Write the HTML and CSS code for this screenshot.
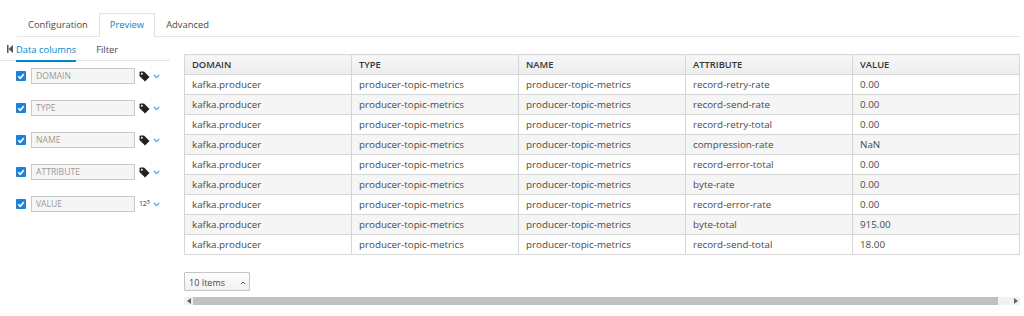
FILE: index.html
```html
<!DOCTYPE html>
<html>
  <head>
    <meta charset="utf-8">
    <title>Preview</title>
    <link rel="stylesheet" href="styles.css">
  </head>
  <body>
    <ul class="tabs">
      <li>Configuration</li>
      <li class="active">Preview</li>
      <li>Advanced</li>
    </ul>

    <div class="main">
      <div class="sidebar">
        <div class="subtabs">
          <span class="collapse">
            <svg width="6" height="8" viewBox="0 0 6 8"><rect x="0" y="0" width="1.5" height="8" fill="#555"/><path d="M6 0 L1.5 4 L6 8 Z" fill="#555"/></svg>
          </span>
          <span class="subtab active">Data columns</span>
          <span class="subtab">Filter</span>
        </div>

        <div class="col-row">
          <span class="check"><svg width="10" height="10" viewBox="0 0 10 10"><path d="M2.2 5.2 L4.2 7.2 L7.9 2.9" stroke="#fff" stroke-width="1.6" fill="none"/></svg></span>
          <input class="col-name" type="text" placeholder="DOMAIN">
          <span class="type-icon"><svg width="11" height="11" viewBox="0 0 11 11"><path d="M0.5 1.5 Q0.5 0.5 1.5 0.5 H5 L10.5 6 L6 10.5 L0.5 5 Z" fill="#222"/><circle cx="2.8" cy="2.8" r="1" fill="#fff"/></svg></span>
          <span class="chev"><svg width="7" height="5" viewBox="0 0 7 5"><path d="M0.8 0.8 L3.5 3.6 L6.2 0.8" stroke="#39a5dc" stroke-width="1.1" fill="none"/></svg></span>
        </div>
        <div class="col-row">
          <span class="check"><svg width="10" height="10" viewBox="0 0 10 10"><path d="M2.2 5.2 L4.2 7.2 L7.9 2.9" stroke="#fff" stroke-width="1.6" fill="none"/></svg></span>
          <input class="col-name" type="text" placeholder="TYPE">
          <span class="type-icon"><svg width="11" height="11" viewBox="0 0 11 11"><path d="M0.5 1.5 Q0.5 0.5 1.5 0.5 H5 L10.5 6 L6 10.5 L0.5 5 Z" fill="#222"/><circle cx="2.8" cy="2.8" r="1" fill="#fff"/></svg></span>
          <span class="chev"><svg width="7" height="5" viewBox="0 0 7 5"><path d="M0.8 0.8 L3.5 3.6 L6.2 0.8" stroke="#39a5dc" stroke-width="1.1" fill="none"/></svg></span>
        </div>
        <div class="col-row">
          <span class="check"><svg width="10" height="10" viewBox="0 0 10 10"><path d="M2.2 5.2 L4.2 7.2 L7.9 2.9" stroke="#fff" stroke-width="1.6" fill="none"/></svg></span>
          <input class="col-name" type="text" placeholder="NAME">
          <span class="type-icon"><svg width="11" height="11" viewBox="0 0 11 11"><path d="M0.5 1.5 Q0.5 0.5 1.5 0.5 H5 L10.5 6 L6 10.5 L0.5 5 Z" fill="#222"/><circle cx="2.8" cy="2.8" r="1" fill="#fff"/></svg></span>
          <span class="chev"><svg width="7" height="5" viewBox="0 0 7 5"><path d="M0.8 0.8 L3.5 3.6 L6.2 0.8" stroke="#39a5dc" stroke-width="1.1" fill="none"/></svg></span>
        </div>
        <div class="col-row">
          <span class="check"><svg width="10" height="10" viewBox="0 0 10 10"><path d="M2.2 5.2 L4.2 7.2 L7.9 2.9" stroke="#fff" stroke-width="1.6" fill="none"/></svg></span>
          <input class="col-name" type="text" placeholder="ATTRIBUTE">
          <span class="type-icon"><svg width="11" height="11" viewBox="0 0 11 11"><path d="M0.5 1.5 Q0.5 0.5 1.5 0.5 H5 L10.5 6 L6 10.5 L0.5 5 Z" fill="#222"/><circle cx="2.8" cy="2.8" r="1" fill="#fff"/></svg></span>
          <span class="chev"><svg width="7" height="5" viewBox="0 0 7 5"><path d="M0.8 0.8 L3.5 3.6 L6.2 0.8" stroke="#39a5dc" stroke-width="1.1" fill="none"/></svg></span>
        </div>
        <div class="col-row">
          <span class="check"><svg width="10" height="10" viewBox="0 0 10 10"><path d="M2.2 5.2 L4.2 7.2 L7.9 2.9" stroke="#fff" stroke-width="1.6" fill="none"/></svg></span>
          <input class="col-name" type="text" placeholder="VALUE">
          <span class="type-icon num">12<sup>3</sup></span>
          <span class="chev"><svg width="7" height="5" viewBox="0 0 7 5"><path d="M0.8 0.8 L3.5 3.6 L6.2 0.8" stroke="#39a5dc" stroke-width="1.1" fill="none"/></svg></span>
        </div>
      </div>

      <div class="content">
        <table class="grid">
          <thead>
            <tr><th>DOMAIN</th><th>TYPE</th><th>NAME</th><th>ATTRIBUTE</th><th>VALUE</th></tr>
          </thead>
          <tbody>
            <tr><td>kafka.producer</td><td>producer-topic-metrics</td><td>producer-topic-metrics</td><td>record-retry-rate</td><td>0.00</td></tr>
            <tr><td>kafka.producer</td><td>producer-topic-metrics</td><td>producer-topic-metrics</td><td>record-send-rate</td><td>0.00</td></tr>
            <tr><td>kafka.producer</td><td>producer-topic-metrics</td><td>producer-topic-metrics</td><td>record-retry-total</td><td>0.00</td></tr>
            <tr><td>kafka.producer</td><td>producer-topic-metrics</td><td>producer-topic-metrics</td><td>compression-rate</td><td>NaN</td></tr>
            <tr><td>kafka.producer</td><td>producer-topic-metrics</td><td>producer-topic-metrics</td><td>record-error-total</td><td>0.00</td></tr>
            <tr><td>kafka.producer</td><td>producer-topic-metrics</td><td>producer-topic-metrics</td><td>byte-rate</td><td>0.00</td></tr>
            <tr><td>kafka.producer</td><td>producer-topic-metrics</td><td>producer-topic-metrics</td><td>record-error-rate</td><td>0.00</td></tr>
            <tr><td>kafka.producer</td><td>producer-topic-metrics</td><td>producer-topic-metrics</td><td>byte-total</td><td>915.00</td></tr>
            <tr><td>kafka.producer</td><td>producer-topic-metrics</td><td>producer-topic-metrics</td><td>record-send-total</td><td>18.00</td></tr>
          </tbody>
        </table>

        <div class="pager">
          <button class="page-size">10 Items <span class="caret"><svg width="6" height="4" viewBox="0 0 6 4"><path d="M0.8 3.2 L3 1 L5.2 3.2" stroke="#555" stroke-width="1" fill="none"/></svg></span></button>
        </div>

        <div class="hscroll">
          <span class="arrow left"><svg width="4" height="6" viewBox="0 0 4 6"><path d="M4 0 L0 3 L4 6 Z" fill="#666"/></svg></span>
          <span class="thumb"></span>
          <span class="arrow right"><svg width="4" height="6" viewBox="0 0 4 6"><path d="M0 0 L4 3 L0 6 Z" fill="#666"/></svg></span>
        </div>
      </div>
    </div>
  </body>
</html>
```

FILE: styles.css
```css
body {
  margin: 0;
  font-family: "Open Sans", sans-serif;
  font-size: 10px;
  color: #4a4a4a;
  background: #fff;
}

.tabs {
  list-style: none;
  margin: 0 4px 0 17px;
  padding: 13px 0 0 0;
  display: flex;
  border-bottom: 1px solid #e6e6e6;
}
.tabs li {
  height: 22px;
  line-height: 22px;
  padding: 0 10px;
  font-size: 9.4px;
  color: #4a4a4a;
  border: 1px solid transparent;
  border-bottom: none;
  margin-bottom: -1px;
}
.tabs li.active {
  color: #0088ce;
  border-color: #e2e2e2;
  background: #fff;
  height: 23px;
}

.main {
  display: flex;
  align-items: flex-start;
}

.sidebar {
  width: 170px;
  flex: none;
}
.subtabs {
  display: flex;
  align-items: center;
  height: 22px;
  margin-top: 1px;
  border-bottom: 1px solid #e6e6e6;
}
.collapse {
  display: flex;
  margin: 0 3px 0 7px;
}
.subtab {
  line-height: 21px;
  padding-top: 1px;
  margin-right: 20px;
  font-size: 9.4px;
}
.subtab.active {
  color: #0088ce;
  border-bottom: 2px solid #0088ce;
  margin-bottom: -1px;
}

.subtabs + .col-row {
  margin-top: -1px;
}
.col-row {
  display: flex;
  align-items: center;
  height: 32px;
  padding-left: 16px;
}
.check {
  width: 10px;
  height: 10px;
  border-radius: 1px;
  background: #1e80d6;
  display: flex;
  align-items: center;
  justify-content: center;
}
.col-name {
  width: 104px;
  height: 16px;
  box-sizing: border-box;
  margin: 0 0 0 5px;
  padding: 0 4px;
  border: 1px solid #c8c8c8;
  background: #f5f5f5;
  font-family: "Open Sans", sans-serif;
  font-size: 8.6px;
}
.col-name::placeholder {
  color: #9a9a9a;
}
.type-icon {
  display: flex;
  width: 11px;
  margin-left: 4px;
}
.type-icon.num {
  font-size: 7px;
  color: #333;
  letter-spacing: -0.3px;
  display: block;
  line-height: 10px;
}
.type-icon.num sup {
  font-size: 6px;
  vertical-align: 2px;
  line-height: 0;
}
.chev {
  display: flex;
  margin-left: 3px;
  padding-top: 1px;
}

.content {
  flex: 1;
  margin: 17px 4px 0 14px;
}
.grid {
  width: 100%;
  border-collapse: collapse;
  table-layout: fixed;
  border: 1px solid #d6d6d6;
}
.grid th,
.grid td {
  text-align: left;
  padding: 0 7px;
  height: 19px;
  border: 1px solid #d6d6d6;
  white-space: nowrap;
  overflow: hidden;
}
.grid th {
  font-weight: 600;
  font-size: 9.4px;
  color: #363636;
  background: linear-gradient(#f7f7f7, #ededed);
}
.grid td {
  font-size: 9.8px;
}
.grid tbody tr:nth-child(even) td {
  background: #f5f5f5;
}

.pager {
  margin-top: 17px;
}
.page-size {
  width: 66px;
  height: 19px;
  padding: 0 0 0 4px;
  text-align: left;
  border: 1px solid #c4c4c4;
  border-radius: 1px;
  background: linear-gradient(#fdfdfd, #f1f1f1);
  font-family: "Open Sans", sans-serif;
  font-size: 9px;
  color: #4a4a4a;
}
.caret {
  display: inline-block;
  margin-left: 13px;
  vertical-align: 1px;
}

.hscroll {
  display: flex;
  align-items: center;
  height: 8px;
  margin-top: 6px;
  background: #f1f1f1;
}
.arrow {
  display: flex;
  justify-content: center;
  width: 9px;
}
.arrow.right {
  width: 22px;
  justify-content: flex-end;
  padding-right: 2px;
  box-sizing: border-box;
}
.thumb {
  flex: 1;
  height: 8px;
  background: #c1c1c1;
}
```
